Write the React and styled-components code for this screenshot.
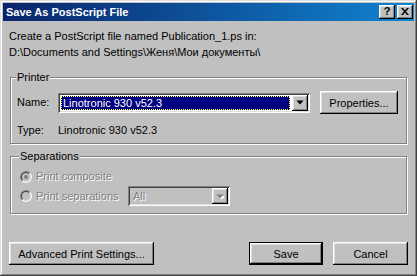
import React from 'react';
import styled, { createGlobalStyle } from 'styled-components';

const GlobalStyle = createGlobalStyle`
  html, body { margin: 0; padding: 0; background: #c0c0c0; }
  body {
    font-family: "Liberation Sans", Arial, sans-serif;
    font-size: 11px;
    color: #000;
  }
  * { box-sizing: border-box; }
`;

const raised = `
  box-shadow: inset -1px -1px #000, inset 1px 1px #fff,
    inset -2px -2px #808080, inset 2px 2px #dfdfdf;
`;

const sunken = `
  box-shadow: inset 1px 1px #808080, inset -1px -1px #fff,
    inset 2px 2px #404040, inset -2px -2px #dfdfdf;
`;

const Window = styled.div`
  width: 417px;
  height: 276px;
  padding: 3px;
  background: #c0c0c0;
  display: flex;
  flex-direction: column;
  box-shadow: inset -1px -1px #404040, inset 1px 1px #dfdfdf,
    inset -2px -2px #808080, inset 2px 2px #fff;
`;

const TitleBar = styled.div`
  height: 18px;
  display: flex;
  align-items: center;
  padding: 0 1px 0 3px;
  background: linear-gradient(to right, #0a246a, #1084d0);
`;

const Title = styled.div`
  flex: 1;
  color: #fff;
  font-weight: bold;
  font-size: 11px;
  white-space: nowrap;
`;

const TitleButtons = styled.div`
  display: flex;
  gap: 2px;
`;

const TitleButton = styled.div`
  width: 16px;
  height: 14px;
  background: #c0c0c0;
  display: flex;
  align-items: center;
  justify-content: center;
  font-weight: bold;
  font-size: 11px;
  line-height: 1;
  padding-bottom: 1px;
  ${raised}
`;

const Body = styled.div`
  flex: 1;
  display: flex;
  flex-direction: column;
  padding: 7px 6px 8px 6px;
`;

const Intro = styled.div`
  line-height: 16px;
  white-space: nowrap;
`;

const Group = styled.fieldset`
  margin: ${p => p.$top}px 1px 0;
  padding: ${p => p.$pad};
  border: 1px solid #808080;
  box-shadow: inset 1px 1px #fff, 1px 1px #fff;
  min-width: 0;
`;

const Legend = styled.legend`
  padding: 0 1px;
  margin-left: -1px;
  line-height: 13px;
  background: #c0c0c0;
`;

const PrinterGrid = styled.div`
  display: grid;
  grid-template-columns: 41px 252px 88px;
  row-gap: 10px;
  align-items: center;
  justify-items: start;
  & > button { justify-self: end; }
`;

const Label = styled.span`
  line-height: 13px;
  white-space: nowrap;
  color: ${p => (p.$disabled ? '#808080' : '#000')};
  text-shadow: ${p => (p.$disabled ? '1px 1px #fff' : 'none')};
`;

const Field = styled.div`
  width: 100%;
  height: ${p => p.$h || 20}px;
  display: flex;
  align-items: stretch;
  padding: 2px;
  background: ${p => (p.$disabled ? '#c0c0c0' : '#fff')};
  ${sunken}
`;

const Highlight = styled.div`
  flex: 1;
  margin: 1px 2px 1px 1px;
  padding-left: 1px;
  display: flex;
  align-items: center;
  color: #fff;
  border: 1px dotted #ffff9c;
  background: linear-gradient(#000080, #000080) padding-box,
    linear-gradient(#000, #000) border-box;
`;

const FieldText = styled.div`
  flex: 1;
  display: flex;
  align-items: center;
  padding-left: 3px;
  color: #808080;
  text-shadow: 1px 1px #fff;
`;

const DropButton = styled.div`
  width: 16px;
  background: #c0c0c0;
  display: flex;
  align-items: center;
  justify-content: center;
  ${raised}
`;

const Button = styled.button`
  height: 23px;
  width: ${p => p.$w}px;
  font: inherit;
  color: #000;
  background: #c0c0c0;
  border: ${p => (p.$default ? '1px solid #000' : 'none')};
  padding: 0;
  ${raised}
`;

const SepGrid = styled.div`
  display: grid;
  grid-template-columns: 108px 102px;
  row-gap: 3px;
  align-items: center;
`;

const RadioRow = styled.div`
  display: flex;
  align-items: center;
  gap: 4px;
`;

const RadioOuter = styled.span`
  width: 12px;
  height: 12px;
  border-radius: 50%;
  border: 1px solid;
  border-color: #808080 #fff #fff #808080;
  display: flex;
`;

const RadioInner = styled.span`
  flex: 1;
  border-radius: 50%;
  border: 1px solid;
  border-color: #404040 #dfdfdf #dfdfdf #404040;
  background: #c0c0c0;
  display: flex;
  align-items: center;
  justify-content: center;
`;

const Dot = styled.span`
  width: 4px;
  height: 4px;
  border-radius: 50%;
  background: #808080;
`;

const Footer = styled.div`
  margin-top: auto;
  display: flex;
  gap: 10px;
  & > :first-child { margin-right: auto; }
`;

function Arrow({ disabled }) {
  return (
    <svg width="8" height="5" viewBox="0 0 8 5">
      {disabled && <polygon points="2,2 9,2 5.5,6" fill="#fff" />}
      <polygon points="0.5,0.5 7.5,0.5 4,4.5" fill={disabled ? '#808080' : '#000'} />
    </svg>
  );
}

function Radio({ checked }) {
  return (
    <RadioOuter>
      <RadioInner>{checked && <Dot />}</RadioInner>
    </RadioOuter>
  );
}

export default function App() {
  return (
    <>
      <GlobalStyle />
      <Window>
        <TitleBar>
          <Title>Save As PostScript File</Title>
          <TitleButtons>
            <TitleButton>?</TitleButton>
            <TitleButton>
              <svg width="8" height="7" viewBox="0 0 8 7">
                <path d="M0 0h2l2 2.5L6 0h2L5 3.5 8 7H6L4 4.5 2 7H0l3-3.5z" fill="#000" />
              </svg>
            </TitleButton>
          </TitleButtons>
        </TitleBar>
        <Body>
          <Intro>
            Create a PostScript file named Publication_1.ps in:
            <br />
            D:\Documents and Settings\Женя\Мои документы\
          </Intro>

          <Group $top={11} $pad="7px 8px 6px 6px">
            <Legend>Printer</Legend>
            <PrinterGrid>
              <Label>Name:</Label>
              <Field>
                <Highlight>Linotronic 930 v52.3</Highlight>
                <DropButton><Arrow /></DropButton>
              </Field>
              <Button $w={78}>Properties...</Button>
              <Label>Type:</Label>
              <Label>Linotronic 930 v52.3</Label>
            </PrinterGrid>
          </Group>

          <Group $top={6} $pad="7px 8px 7px 9px">
            <Legend>Separations</Legend>
            <SepGrid>
              <RadioRow>
                <Radio checked />
                <Label $disabled>Print composite</Label>
              </RadioRow>
              <span />
              <RadioRow>
                <Radio />
                <Label $disabled>Print separations</Label>
              </RadioRow>
              <Field $disabled>
                <FieldText>All</FieldText>
                <DropButton><Arrow disabled /></DropButton>
              </Field>
            </SepGrid>
          </Group>

          <Footer>
            <Button $w={145}>Advanced Print Settings...</Button>
            <Button $w={74} $default>Save</Button>
            <Button $w={75}>Cancel</Button>
          </Footer>
        </Body>
      </Window>
    </>
  );
}
